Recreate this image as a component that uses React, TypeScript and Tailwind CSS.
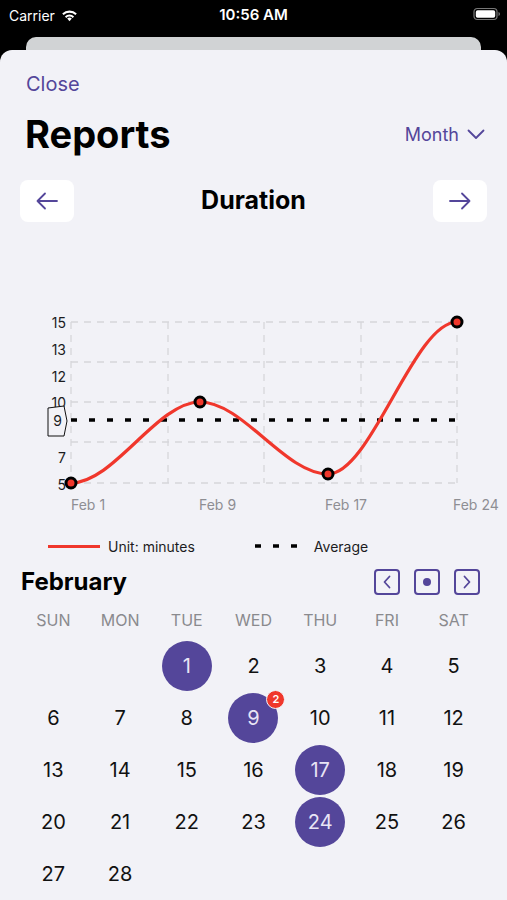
import React from "react";

const P = "#54469a";

function Wifi() {
  return (
    <svg width="17" height="13" viewBox="0 0 17 13">
      <path d="M8.5 12.2 L10.8 9.6 A3.4 3.4 0 0 0 6.2 9.6 Z" fill="white" />
      <path d="M3.9 7.4 A6.6 6.6 0 0 1 13.1 7.4 L11.7 8.9 A4.6 4.6 0 0 0 5.3 8.9 Z" fill="white" />
      <path d="M1.2 4.6 A10.4 10.4 0 0 1 15.8 4.6 L14.4 6.1 A8.4 8.4 0 0 0 2.6 6.1 Z" fill="white" />
    </svg>
  );
}

function Battery() {
  return (
    <svg width="28" height="14" viewBox="0 0 28 14">
      <rect x="1" y="1.5" width="23" height="11" rx="3.2" fill="none" stroke="#777" strokeWidth="1.2" />
      <rect x="2.8" y="3.3" width="19.4" height="7.4" rx="1.8" fill="white" />
      <path d="M25.5 5 Q27 5.3 27 7 Q27 8.7 25.5 9 Z" fill="#777" />
    </svg>
  );
}

function Chart() {
  const xs = [71, 168, 264, 361, 457];
  const ys = [322, 362, 402, 442, 483];
  return (
    <svg width="507" height="306" viewBox="0 222 507 306" className="block">
      {ys.map((y) => (
        <line key={"h" + y} x1="71" x2="457" y1={y} y2={y} stroke="#d6d6da" strokeWidth="1.3" strokeDasharray="7 6" />
      ))}
      {xs.map((x) => (
        <line key={"v" + x} x1={x} x2={x} y1="322" y2="483" stroke="#d6d6da" strokeWidth="1.3" strokeDasharray="7 6" />
      ))}
      <g fontFamily="Inter, 'Noto Sans', sans-serif" fontSize="14" fill="#1c1c1e" textAnchor="end">
        <text x="66" y="328">15</text>
        <text x="66" y="355">13</text>
        <text x="66" y="382">12</text>
        <text x="66" y="408">10</text>
        <text x="66" y="463">7</text>
        <text x="66" y="490">5</text>
      </g>
      <path d="M48 408 L64 406 L67 421 L64 436 L48 436 Z" fill="#f2f2f7" stroke="#111" strokeWidth="1" />
      <text x="57.5" y="426" fontFamily="Inter, 'Noto Sans', sans-serif" fontSize="14" fill="#1c1c1e" textAnchor="middle">9</text>
      <line x1="71" x2="457" y1="420" y2="420" stroke="#000" strokeWidth="3.5" strokeDasharray="6 12" />
      <path
        d="M71 483 C114 483 157 402 200 402 C243 402 285 474 328 474 C371 474 414 322 457 322"
        fill="none"
        stroke="#f0372c"
        strokeWidth="3.2"
      />
      {[
        [71, 483],
        [200, 402],
        [328, 474],
        [457, 322],
      ].map(([x, y]) => (
        <circle key={x} cx={x} cy={y} r="5" fill="#f0372c" stroke="#000" strokeWidth="3" />
      ))}
      <g fontFamily="Inter, 'Noto Sans', sans-serif" fontSize="14" fill="#8e8e93">
        <text x="71" y="510">Feb 1</text>
        <text x="199" y="510">Feb 9</text>
        <text x="325" y="510">Feb 17</text>
        <text x="453" y="510">Feb 24</text>
      </g>
    </svg>
  );
}

const days: (number | null)[] = [null, null, ...Array.from({ length: 28 }, (_, i) => i + 1)];
const selected = new Set([1, 9, 17, 24]);

export default function App() {
  return (
    <div className="w-[507px] h-[900px] bg-black overflow-hidden" style={{ fontFamily: "Inter, 'Noto Sans', sans-serif" }}>
      <div className="h-[37px] relative flex items-center text-white">
        <div className="absolute left-[9px] top-[5px] flex items-center gap-[6px]">
          <span className="text-[14px]">Carrier</span>
          <Wifi />
        </div>
        <div className="absolute left-0 right-0 top-[4px] text-center text-[15px] font-semibold">10:56 AM</div>
        <div className="absolute right-[6px] top-[7px]">
          <Battery />
        </div>
      </div>
      <div className="h-[13px] mx-[26px] rounded-t-[10px] bg-[#d1d3d5]" />
      <div className="bg-[#f2f2f7] rounded-t-[12px] h-[850px]">
        <div className="pt-[22px] px-[26px] text-[20px] leading-[24px] text-[#54469a]">Close</div>
        <div className="mt-[17px] flex items-center justify-between pl-[25px] pr-[22px]">
          <div className="text-[38px] leading-[43px] font-bold text-black">Reports</div>
          <div className="flex items-center gap-[8px] text-[18px] text-[#54469a]">
            <span>Month</span>
            <svg width="18" height="11" viewBox="0 0 18 11">
              <path d="M1.5 1.5 L9 9 L16.5 1.5" fill="none" stroke={P} strokeWidth="1.8" strokeLinecap="round" strokeLinejoin="round" />
            </svg>
          </div>
        </div>
        <div className="mt-[24px] flex items-center justify-between px-[20px]">
          <div className="w-[54px] h-[42px] bg-white rounded-[8px] flex items-center justify-center">
            <svg width="24" height="18" viewBox="0 0 24 18">
              <path d="M22 9 H2.5 M10 1.5 L2.5 9 L10 16.5" fill="none" stroke={P} strokeWidth="1.8" strokeLinecap="round" strokeLinejoin="round" />
            </svg>
          </div>
          <div className="text-[25px] font-bold text-black">Duration</div>
          <div className="w-[54px] h-[42px] bg-white rounded-[8px] flex items-center justify-center">
            <svg width="24" height="18" viewBox="0 0 24 18">
              <path d="M2 9 H21.5 M14 1.5 L21.5 9 L14 16.5" fill="none" stroke={P} strokeWidth="1.8" strokeLinecap="round" strokeLinejoin="round" />
            </svg>
          </div>
        </div>
        <Chart />
        <div className="mt-[8px] h-[20px] flex items-center text-[14px] text-[#1c1c1e]">
          <div className="ml-[48px] w-[52px] h-[3px] bg-[#f0372c]" />
          <span className="ml-[8px]">Unit: minutes</span>
          <svg width="44" height="4" className="ml-[60px]">
            <line x1="0" x2="44" y1="2" y2="2" stroke="#000" strokeWidth="3.5" strokeDasharray="6 12" />
          </svg>
          <span className="ml-[15px]">Average</span>
        </div>
        <div className="mt-[11px] h-[30px] flex items-center justify-between pl-[21px] pr-[27px]">
          <div className="text-[24px] font-bold text-black">February</div>
          <div className="flex items-center gap-[14px]">
            <div className="w-[26px] h-[26px] border-2 border-[#54469a] rounded-[4px] flex items-center justify-center">
              <svg width="10" height="14" viewBox="0 0 10 14">
                <path d="M7.5 1.5 L2.5 7 L7.5 12.5" fill="none" stroke={P} strokeWidth="1.8" strokeLinecap="round" strokeLinejoin="round" />
              </svg>
            </div>
            <div className="w-[26px] h-[26px] border-2 border-[#54469a] rounded-[4px] flex items-center justify-center">
              <div className="w-[8px] h-[8px] rounded-full bg-[#54469a]" />
            </div>
            <div className="w-[26px] h-[26px] border-2 border-[#54469a] rounded-[4px] flex items-center justify-center">
              <svg width="10" height="14" viewBox="0 0 10 14">
                <path d="M2.5 1.5 L7.5 7 L2.5 12.5" fill="none" stroke={P} strokeWidth="1.8" strokeLinecap="round" strokeLinejoin="round" />
              </svg>
            </div>
          </div>
        </div>
        <div className="mt-[13px] h-[20px] grid grid-cols-7 px-[20px] text-[16px] text-[#8a8a8e] text-center leading-[20px]">
          {["SUN", "MON", "TUE", "WED", "THU", "FRI", "SAT"].map((d) => (
            <div key={d}>{d}</div>
          ))}
        </div>
        <div className="mt-[10px] grid grid-cols-7 px-[20px]">
          {days.map((d, i) => (
            <div key={i} className="h-[52px] flex items-center justify-center">
              {d !== null &&
                (selected.has(d) ? (
                  <div className="relative w-[50px] h-[50px] rounded-full bg-[#54469a] flex items-center justify-center text-[20px] text-[#e8e4f5]">
                    {d}
                    {d === 9 && (
                      <div className="absolute right-[-7px] top-[-3px] w-[19px] h-[19px] rounded-full bg-[#f0372c] border border-[#f2f2f7] flex items-center justify-center text-[11px] font-semibold text-white leading-none">
                        2
                      </div>
                    )}
                  </div>
                ) : (
                  <span className="text-[20px] text-[#111]">{d}</span>
                ))}
            </div>
          ))}
        </div>
      </div>
    </div>
  );
}
